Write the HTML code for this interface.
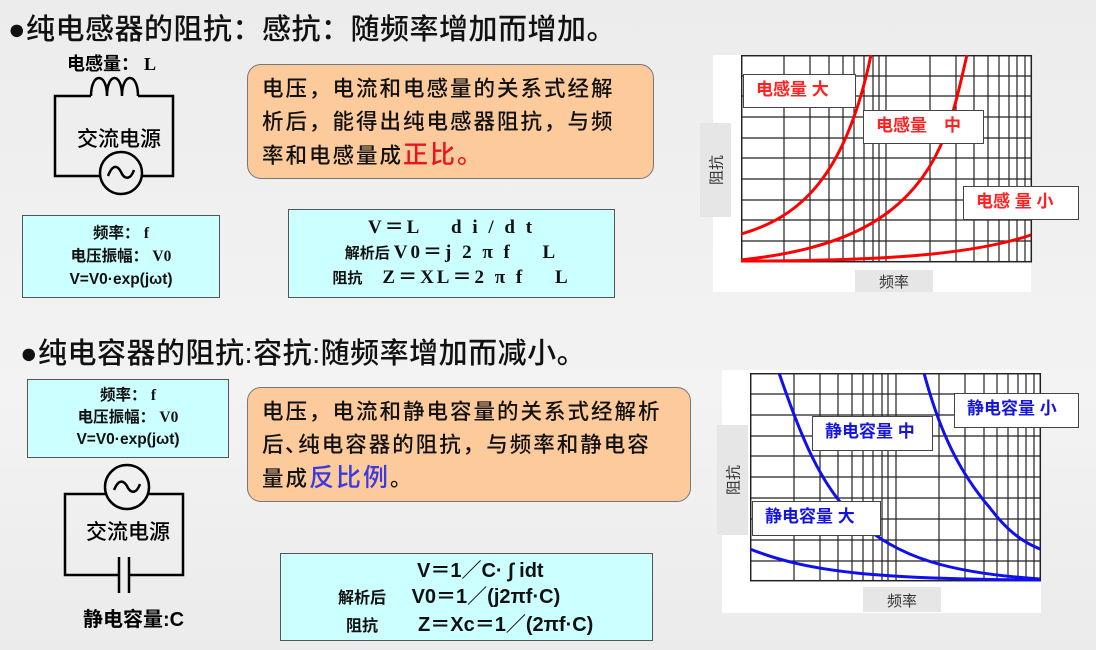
<!DOCTYPE html>
<html><head><meta charset="utf-8"><style>
body{margin:0;width:1096px;height:650px;overflow:hidden;background:linear-gradient(#ececec,#f3f3f3 60%,#ebebeb);font-family:"Liberation Sans","Noto Sans CJK SC",sans-serif;position:relative}
.a{position:absolute;white-space:nowrap}
.t{font-size:29px;color:#111;letter-spacing:0.5px;font-weight:500}
.or{position:absolute;background:#fdca9c;border:1.5px solid #777;border-radius:14px;font-size:21.5px;letter-spacing:2px;line-height:33px;color:#111;padding:8px 0 0 14px;box-sizing:border-box;font-weight:500;white-space:nowrap}
.cy{position:absolute;background:#ccffff;border:1.5px solid #555;box-sizing:border-box;text-align:center;font-weight:bold;color:#111}
.lb{position:absolute;background:#fff;border:1.5px solid #444;box-sizing:border-box;font-weight:bold;font-size:17px;line-height:30px;padding-left:12px}
.g{position:absolute;background:#e6e6e6;color:#333;font-size:15px}
.v{position:absolute;left:50%;top:50%;transform:translate(-50%,-50%) rotate(-90deg);white-space:nowrap}
</style></head><body>
<div class="a t" style="left:8px;top:6px">●纯电感器的阻抗：感抗：随频率增加而增加。</div>
<div class="a t" style="left:20px;top:330px">●纯电容器的阻抗:容抗:随频率增加而减小。</div>

<!-- circuit 1 -->
<div class="a" style="left:67px;top:50px;font-size:18px;font-weight:bold">电感量： <span style="font-family:'Liberation Serif'">L</span></div>
<svg class="a" style="left:0;top:0" width="240" height="650">
<g fill="none" stroke="#000" stroke-width="2.5">
<path d="M91,96 H55 V176 H100 M142,176 H173 V96 H138"/>
<path d="M91,96 C91,72 107,72 107,96 C107,72 122,72 122,96 C122,72 138,72 138,96"/>
<circle cx="121" cy="173" r="21"/>
<path d="M108,176 C113,163 118,166 121,172 C124,179 130,181 134,170"/>
<circle cx="127" cy="487" r="22"/>
<path d="M105,494 H65 V575 H119 M130,575 H183 V494 H149"/>
<path d="M114,490 C119,478 124,481 127,486 C130,493 136,495 140,484"/>
<path d="M119,557 V593 M129,557 V593"/>
</g></svg>
<div class="a" style="left:77px;top:123px;font-size:21px;font-weight:500">交流电源</div>
<div class="a" style="left:86px;top:516px;font-size:21px;font-weight:500">交流电源</div>
<div class="a" style="left:83px;top:603px;font-size:20px;font-weight:bold">静电容量:C</div>

<div class="cy" style="left:22px;top:215px;width:198px;height:83px;font-size:15.5px;line-height:23px;padding-top:6px">频率： <span style="font-family:'Liberation Serif'">f</span><br>电压振幅： <span style="font-family:'Liberation Serif'">V0</span><br>V=V0·exp(jωt)</div>
<div class="cy" style="left:27px;top:379px;width:202px;height:79px;font-size:15.5px;line-height:22px;padding-top:5px">频率： <span style="font-family:'Liberation Serif'">f</span><br>电压振幅： <span style="font-family:'Liberation Serif'">V0</span><br>V=V0·exp(jωt)</div>

<div class="or" style="left:247px;top:64px;width:407px;height:115px">电压，电流和电感量的关系式经解<br>析后，能得出纯电感器阻抗，与频<br>率和电感量成<span style="color:#e8141e;font-size:25px">正比。</span></div>
<div class="or" style="left:247px;top:387px;width:444px;height:115px">电压，电流和静电容量的关系式经解析<br>后､纯电容器的阻抗，与频率和静电容<br>量成<span style="color:#3a3ae0;font-size:25px">反比例</span>。</div>

<div class="cy" style="left:288px;top:209px;width:327px;height:89px;font-size:16px;line-height:24px;padding-top:6px;font-family:'Liberation Serif','Noto Sans CJK SC',serif">
<span style="font-size:19px;letter-spacing:3px">V＝L　 d i / d t</span><br>
<span style="font-size:15px;font-family:'Noto Sans CJK SC'">解析后</span> <span style="font-size:19px;letter-spacing:3px">V0＝j 2 π f　 L</span><br>
<span style="font-size:15px;font-family:'Noto Sans CJK SC'">阻抗</span>　 <span style="font-size:19px;letter-spacing:3px">Z＝XL＝2 π f　 L</span></div>
<div class="cy" style="left:280px;top:553px;width:373px;height:88px;font-size:20px;line-height:26px;padding-top:4px;text-align:left">
<div style="padding-left:136px">V＝1／C· ∫ idt</div>
<div style="padding-left:57px"><span style="font-size:16px">解析后</span>　 V0＝1／(j2πf·C)</div>
<div style="padding-left:65px"><span style="font-size:16px">阻抗</span>　　Z＝Xc＝1／(2πf·C)</div></div>

<!-- chart 1 -->
<div class="a" style="left:713px;top:55px;width:318px;height:237px;background:#fff"></div>
<div class="g" style="left:700px;top:123px;width:31px;height:94px"><div class="v">阻抗</div></div>
<div class="g" style="left:855px;top:270px;width:78px;height:22px;text-align:center;line-height:26px">频率</div>
<svg class="a" style="left:741px;top:55px" width="292" height="208">
<g stroke="#222" stroke-width="1.2" fill="none">
<path d="M0,21H290M0,41H290M0,62H290M0,83H290M0,103H290M0,124H290M0,145H290M0,165H290M0,186H290"/>
<path d="M43,0V207M69,0V207M88,0V207M102,0V207M113,0V207M123,0V207M132,0V207M138,0V207M145,0V207M189,0V207M215,0V207M233,0V207M247,0V207M258,0V207M268,0V207M276,0V207M284,0V207"/>
<rect x="0.7" y="0.7" width="289.6" height="206" stroke-width="1.5"/>
</g>
<g stroke="#f00" stroke-width="3" fill="none">
<path d="M0,179 C60,162 105,120 130,0"/>
<path d="M0,205 C90,195 170,170 204,80 C214,55 220,25 226,0"/>
<path d="M0,206 C140,206 230,200 290,180"/>
</g></svg>
<div class="lb" style="left:743px;top:74px;width:113px;height:34px;color:#f22">电感量 大</div>
<div class="lb" style="left:863px;top:110px;width:121px;height:34px;color:#f22">电感量　中</div>
<div class="lb" style="left:963px;top:186px;width:116px;height:34px;color:#f22">电感 量 小</div>

<!-- chart 2 -->
<div class="a" style="left:722px;top:370px;width:319px;height:243px;background:#fff"></div>
<div class="g" style="left:717px;top:425px;width:31px;height:110px"><div class="v">阻抗</div></div>
<div class="g" style="left:863px;top:587px;width:78px;height:25px;text-align:center;line-height:30px">频率</div>
<svg class="a" style="left:750px;top:373px" width="292" height="210">
<g stroke="#222" stroke-width="1.2" fill="none">
<path d="M0,21H290M0,42H290M0,63H290M0,83H290M0,104H290M0,125H290M0,146H290M0,167H290M0,188H290"/>
<path d="M44,0V208M70,0V208M88,0V208M102,0V208M113,0V208M123,0V208M132,0V208M138,0V208M146,0V208M189,0V208M215,0V208M234,0V208M247,0V208M258,0V208M268,0V208M276,0V208M284,0V208"/>
<rect x="0.7" y="0.7" width="289.6" height="207" stroke-width="1.5"/>
</g>
<g stroke="#1010ee" stroke-width="3" fill="none">
<path d="M29,0 C50,60 70,115 110,150 C150,185 200,200 290,206"/>
<path d="M174,0 C190,60 210,100 240,135 C255,155 270,168 290,176"/>
<path d="M0,176 C60,200 130,206 290,207"/>
</g></svg>
<div class="lb" style="left:812px;top:416px;width:121px;height:35px;color:#1515dd">静电容量 中</div>
<div class="lb" style="left:954px;top:393px;width:125px;height:35px;color:#1515dd">静电容量 小</div>
<div class="lb" style="left:752px;top:501px;width:129px;height:35px;color:#1515dd">静电容量 大</div>
</body></html>
